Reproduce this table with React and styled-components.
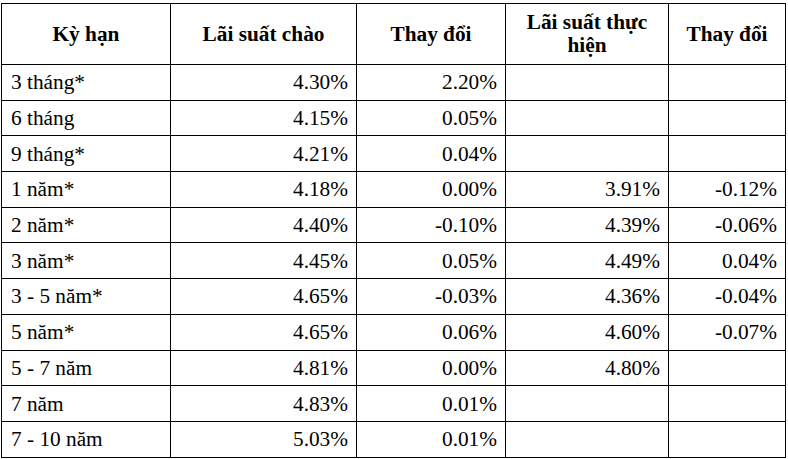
import React from "react";
import styled, { createGlobalStyle } from "styled-components";

const GlobalStyle = createGlobalStyle`
  html, body {
    margin: 0;
    padding: 0;
    background: #ffffff;
  }
`;

const serif = `"Liberation Serif", "Times New Roman", serif`;

const Page = styled.div`
  padding: 3px 0 0 1px;
  font-family: ${serif};
  color: #000000;
`;

const Table = styled.table`
  border-collapse: collapse;
  table-layout: fixed;
  width: 784px;
  font-family: ${serif};
  font-size: 21.3px;
`;

const HeadCell = styled.th`
  border: 1px solid #000;
  height: 60px;
  padding: 0 6px;
  text-align: center;
  vertical-align: middle;
  font-family: ${serif};
  font-size: 21.3px;
  font-weight: bold;
  line-height: 23px;
`;

const Cell = styled.td`
  border: 1px solid #000;
  height: 34.7px;
  padding: 0 8px 0 ${(p) => (p.$align === "left" ? "9px" : "8px")};
  text-align: ${(p) => p.$align || "right"};
  vertical-align: middle;
  font-family: ${serif};
  font-size: 21.3px;
  line-height: 22px;
  white-space: nowrap;
`;

const columns = [
  { label: "Kỳ hạn", width: 169 },
  { label: "Lãi suất chào", width: 186 },
  { label: "Thay đổi", width: 149 },
  { label: "Lãi suất thực hiện", width: 163 },
  { label: "Thay đổi", width: 117 },
];

const rows = [
  ["3 tháng*", "4.30%", "2.20%", "", ""],
  ["6 tháng", "4.15%", "0.05%", "", ""],
  ["9 tháng*", "4.21%", "0.04%", "", ""],
  ["1 năm*", "4.18%", "0.00%", "3.91%", "-0.12%"],
  ["2 năm*", "4.40%", "-0.10%", "4.39%", "-0.06%"],
  ["3 năm*", "4.45%", "0.05%", "4.49%", "0.04%"],
  ["3 - 5 năm*", "4.65%", "-0.03%", "4.36%", "-0.04%"],
  ["5 năm*", "4.65%", "0.06%", "4.60%", "-0.07%"],
  ["5 - 7 năm", "4.81%", "0.00%", "4.80%", ""],
  ["7 năm", "4.83%", "0.01%", "", ""],
  ["7 - 10 năm", "5.03%", "0.01%", "", ""],
];

export default function App() {
  return (
    <Page>
      <GlobalStyle />
      <Table>
        <colgroup>
          {columns.map((c, i) => (
            <col key={i} style={{ width: c.width }} />
          ))}
        </colgroup>
        <thead>
          <tr>
            {columns.map((c, i) => (
              <HeadCell key={i}>{c.label}</HeadCell>
            ))}
          </tr>
        </thead>
        <tbody>
          {rows.map((r, i) => (
            <tr key={i}>
              {r.map((v, j) => (
                <Cell key={j} $align={j === 0 ? "left" : "right"}>
                  {v}
                </Cell>
              ))}
            </tr>
          ))}
        </tbody>
      </Table>
    </Page>
  );
}
